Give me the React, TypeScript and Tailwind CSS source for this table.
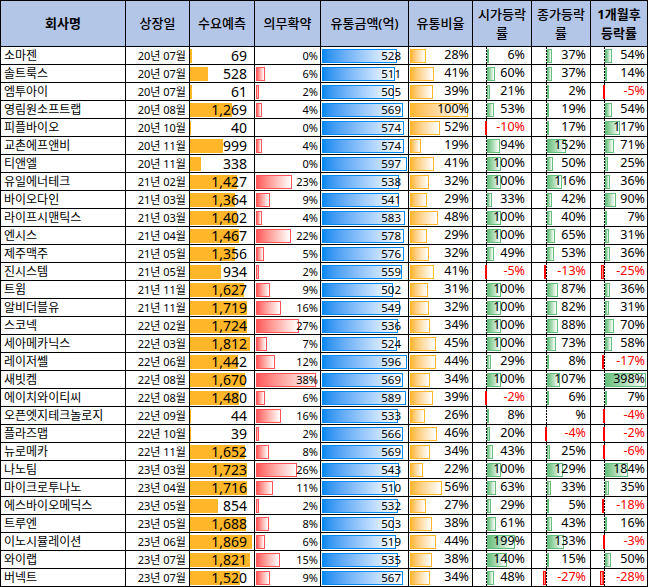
type Row = {
  name: string;
  date: string;
  demand: number;
  lock: number;
  amount: number;
  ratio: number;
  open: number;
  close: number | null;
  month: number;
};

const rows: Row[] = [
  { name: '소마젠', date: '20년 07월', demand: 69, lock: 0, amount: 528, ratio: 28, open: 6, close: 37, month: 54 },
  { name: '솔트룩스', date: '20년 07월', demand: 528, lock: 6, amount: 511, ratio: 41, open: 60, close: 37, month: 14 },
  { name: '엠투아이', date: '20년 07월', demand: 61, lock: 2, amount: 505, ratio: 39, open: 21, close: 2, month: -5 },
  { name: '영림원소프트랩', date: '20년 08월', demand: 1269, lock: 4, amount: 569, ratio: 100, open: 53, close: 19, month: 54 },
  { name: '피플바이오', date: '20년 10월', demand: 40, lock: 0, amount: 574, ratio: 52, open: -10, close: 17, month: 117 },
  { name: '교촌에프앤비', date: '20년 11월', demand: 999, lock: 4, amount: 574, ratio: 19, open: 94, close: 152, month: 71 },
  { name: '티앤엘', date: '20년 11월', demand: 338, lock: 0, amount: 597, ratio: 41, open: 100, close: 50, month: 25 },
  { name: '유일에너테크', date: '21년 02월', demand: 1427, lock: 23, amount: 538, ratio: 32, open: 100, close: 116, month: 36 },
  { name: '바이오다인', date: '21년 03월', demand: 1364, lock: 9, amount: 541, ratio: 29, open: 33, close: 42, month: 90 },
  { name: '라이프시맨틱스', date: '21년 03월', demand: 1402, lock: 4, amount: 583, ratio: 48, open: 100, close: 40, month: 7 },
  { name: '엔시스', date: '21년 04월', demand: 1467, lock: 22, amount: 578, ratio: 29, open: 100, close: 65, month: 31 },
  { name: '제주맥주', date: '21년 05월', demand: 1356, lock: 5, amount: 576, ratio: 32, open: 49, close: 53, month: 36 },
  { name: '진시스템', date: '21년 05월', demand: 934, lock: 2, amount: 559, ratio: 41, open: -5, close: -13, month: -25 },
  { name: '트윔', date: '21년 11월', demand: 1627, lock: 9, amount: 502, ratio: 31, open: 100, close: 87, month: 36 },
  { name: '알비더블유', date: '21년 11월', demand: 1719, lock: 16, amount: 549, ratio: 32, open: 100, close: 82, month: 31 },
  { name: '스코넥', date: '22년 02월', demand: 1724, lock: 27, amount: 536, ratio: 34, open: 100, close: 88, month: 70 },
  { name: '세아메카닉스', date: '22년 03월', demand: 1812, lock: 7, amount: 524, ratio: 45, open: 100, close: 73, month: 58 },
  { name: '레이저쎌', date: '22년 06월', demand: 1442, lock: 12, amount: 596, ratio: 44, open: 29, close: 8, month: -17 },
  { name: '새빗켐', date: '22년 08월', demand: 1670, lock: 38, amount: 569, ratio: 34, open: 100, close: 107, month: 398 },
  { name: '에이치와이티씨', date: '22년 08월', demand: 1480, lock: 6, amount: 589, ratio: 39, open: -2, close: 6, month: 7 },
  { name: '오픈엣지테크놀로지', date: '22년 09월', demand: 44, lock: 16, amount: 533, ratio: 26, open: 8, close: null, month: -4 },
  { name: '플라즈맵', date: '22년 10월', demand: 39, lock: 2, amount: 566, ratio: 46, open: 20, close: -4, month: -2 },
  { name: '뉴로메카', date: '22년 11월', demand: 1652, lock: 8, amount: 569, ratio: 34, open: 43, close: 25, month: -6 },
  { name: '나노팀', date: '23년 03월', demand: 1723, lock: 26, amount: 543, ratio: 22, open: 100, close: 129, month: 184 },
  { name: '마이크로투나노', date: '23년 04월', demand: 1716, lock: 11, amount: 510, ratio: 56, open: 63, close: 33, month: 35 },
  { name: '에스바이오메딕스', date: '23년 05월', demand: 854, lock: 2, amount: 532, ratio: 27, open: 29, close: 5, month: -18 },
  { name: '트루엔', date: '23년 05월', demand: 1688, lock: 8, amount: 503, ratio: 38, open: 61, close: 43, month: 16 },
  { name: '이노시뮬레이션', date: '23년 06월', demand: 1869, lock: 6, amount: 519, ratio: 44, open: 199, close: 133, month: -3 },
  { name: '와이랩', date: '23년 07월', demand: 1821, lock: 15, amount: 535, ratio: 38, open: 140, close: 15, month: 50 },
  { name: '버넥트', date: '23년 07월', demand: 1520, lock: 9, amount: 567, ratio: 34, open: 48, close: -27, month: -28 },
];

const cell = 'relative h-[17px] bg-white flex items-center overflow-hidden';
const dashed =
  'absolute top-0 bottom-0 w-px bg-[repeating-linear-gradient(to_bottom,#000_0px,#000_2px,transparent_2px,transparent_3px)]';

// 등락률 칸: 축(점선) 기준으로 양수는 녹색, 음수는 빨간색 막대
function ChangeCell({
  value,
  axis,
  scale,
  cap,
  pad,
}: {
  value: number | null;
  axis: number;
  scale: number;
  cap: number;
  pad: string;
}) {
  const len = value === null || value === 0 ? 0 : Math.max(1, Math.min(cap, Math.round((Math.abs(value) * scale) / 100)));
  return (
    <div className={`${cell} justify-end ${pad}`}>
      <div className={dashed} style={{ left: axis }} />
      {value !== null && value > 0 && (
        <div
          className="absolute top-[2px] bottom-[1px] border border-[#63BE7B] bg-linear-to-r from-[#63BE7B] to-white"
          style={{ left: axis + 1, width: len }}
        />
      )}
      {value !== null && value < 0 && (
        <div
          className="absolute top-[2px] bottom-[1px] border border-[#FF0000] bg-linear-to-l from-[#FF0000] to-[#ffd0d0]"
          style={{ left: axis - len, width: len }}
        />
      )}
      <span className={`relative text-[12.5px] leading-none ${value !== null && value < 0 ? 'text-[#FF0000]' : 'text-black'}`}>
        {value === null ? '' : value}%
      </span>
    </div>
  );
}

export default function App() {
  return (
    <div className="w-[649px] h-[587px] bg-white font-['Noto_Sans','Noto_Sans_CJK_KR',sans-serif] text-black">
      <div className="grid w-fit grid-cols-[124px_63px_64px_65px_87px_63px_58px_58px_56px] gap-px bg-black p-px">
        {/* 헤더 */}
        <div className="h-[45px] bg-[#B4C6E7] flex items-center justify-center text-[13px] font-bold">회사명</div>
        <div className="bg-[#B4C6E7] flex items-center justify-center text-[13px] font-medium">상장일</div>
        <div className="bg-[#B4C6E7] flex items-center justify-center text-[13px] font-medium">수요예측</div>
        <div className="bg-[#B4C6E7] flex items-center justify-center text-[13px] font-medium">의무확약</div>
        <div className="bg-[#B4C6E7] flex items-center justify-center text-[13px] font-medium">유통금액(억)</div>
        <div className="bg-[#B4C6E7] flex items-center justify-center text-[13px] font-medium">유통비율</div>
        <div className="bg-[#B4C6E7] flex items-center justify-center text-center text-[13px] font-medium leading-[19px]">
          시가등락
          <br />률
        </div>
        <div className="bg-[#B4C6E7] flex items-center justify-center text-center text-[13px] font-medium leading-[19px]">
          종가등락
          <br />률
        </div>
        <div className="bg-[#B4C6E7] flex items-center justify-center text-center text-[13px] font-bold leading-[19px]">
          1개월후
          <br />등락률
        </div>

        {rows.map((r) => (
          <div key={r.name} className="contents">
            <div className={`${cell} pl-[3px] text-[12px] leading-none`}>{r.name}</div>
            <div className={`${cell} justify-end pr-[3px] text-[11px] leading-none`}>{r.date}</div>

            <div className={`${cell} justify-end pr-[7px]`}>
              <div
                className="absolute left-0 top-[2px] bottom-[1px] bg-[#FFB628]"
                style={{ width: Math.max(1, Math.round((r.demand / 1869) * 62)) }}
              />
              <span className="relative text-[14px] leading-none">{r.demand.toLocaleString('en-US')}</span>
            </div>

            <div className={`${cell} justify-end pr-[2px]`}>
              {r.lock > 0 && (
                <div
                  className="absolute left-[1px] top-[2px] bottom-[1px] border border-[#FF555A] bg-linear-to-r from-[#FF555A] to-white"
                  style={{ width: Math.max(3, Math.round((r.lock / 38) * 60)) }}
                />
              )}
              <span className="relative text-[11px] leading-none">{r.lock}%</span>
            </div>

            <div className={`${cell} justify-end pr-[7px]`}>
              <div
                className="absolute left-[1px] top-[2px] bottom-[1px] border border-[#008AEF] bg-linear-to-r from-[#008AEF] to-white"
                style={{ width: Math.round((r.amount / 597) * 85) }}
              />
              <span className="relative text-[11.5px] leading-none">{r.amount}</span>
            </div>

            <div className={`${cell} justify-end pr-[3px]`}>
              <div
                className="absolute left-[1px] top-[2px] bottom-[1px] border border-[#FFB628] bg-linear-to-r from-[#FFB628] to-white"
                style={{ width: Math.round((r.ratio / 100) * 58) }}
              />
              <span className="relative text-[12.5px] leading-none">{r.ratio}%</span>
            </div>

            <ChangeCell value={r.open} axis={13} scale={14} cap={44} pad="pr-[6px]" />
            <ChangeCell value={r.close} axis={14} scale={12.5} cap={43} pad="pr-[4px]" />
            <ChangeCell value={r.month} axis={13} scale={12.5} cap={41} pad="pr-[2px]" />
          </div>
        ))}
      </div>
    </div>
  );
}
